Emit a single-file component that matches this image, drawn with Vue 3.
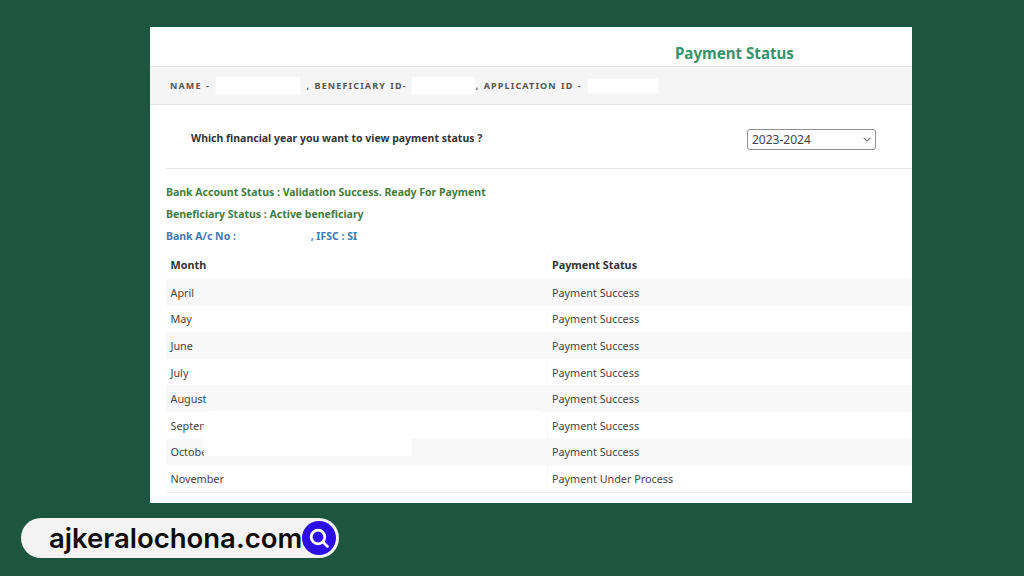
<script setup>
const rows = [
  ['April', 'Payment Success'],
  ['May', 'Payment Success'],
  ['June', 'Payment Success'],
  ['July', 'Payment Success'],
  ['August', 'Payment Success'],
  ['September', 'Payment Success'],
  ['October', 'Payment Success'],
  ['November', 'Payment Under Process'],
]
</script>

<template>
  <div class="page">
    <main class="card">
      <h1 class="title">Payment Status</h1>
      <div class="idbar">
        <span>NAME -</span><span class="hide w-name"></span>
        <span>, BENEFICIARY ID-</span><span class="hide w-id"></span>
        <span>, APPLICATION ID -</span><span class="hide w-app"></span>
      </div>
      <div class="year">
        <span class="question">Which financial year you want to view payment status ?</span>
        <div class="select">
          <span>2023-2024</span>
          <svg width="8" height="5" viewBox="0 0 8 5"><path d="M.7.8L4 4 7.3.8" fill="none" stroke="#777" stroke-width="1.1"/></svg>
        </div>
      </div>
      <div class="info">
        <p class="ok">Bank Account Status : Validation Success. Ready For Payment</p>
        <p class="ok">Beneficiary Status : Active beneficiary</p>
        <p class="bank">Bank A/c No : <span class="hide w-acc"></span>, IFSC : SI</p>
      </div>
      <div class="table">
        <div class="row head">
          <div class="cell">Month</div>
          <div class="cell">Payment Status</div>
        </div>
        <div v-for="r in rows" :key="r[0]" class="row">
          <div class="cell">{{ r[0] }}</div>
          <div class="cell">{{ r[1] }}</div>
        </div>
        <div class="mask mask-a"></div>
        <div class="mask mask-b"></div>
      </div>
    </main>
    <div class="pill">
      <span class="site">ajkeralochona.com</span>
      <span class="badge">
        <svg width="24" height="24" viewBox="0 0 24 24"><circle cx="11" cy="11" r="6.8" fill="none" stroke="#fff" stroke-width="2.8"/><path d="M16 16l4.5 4.5" stroke="#fff" stroke-width="2.6" stroke-linecap="round"/></svg>
      </span>
    </div>
  </div>
</template>

<style scoped>
.page {
  width: 1024px;
  height: 576px;
  box-sizing: border-box;
  padding-top: 27px;
  background: #1e5541;
  overflow: hidden;
  font-family: "Noto Sans", sans-serif;
}
.card {
  width: 762px;
  height: 476px;
  margin-left: 150px;
  background: #fff;
  overflow: hidden;
}
.title {
  margin: 0;
  height: 39px;
  padding: 16px 0 0 525px;
  box-sizing: border-box;
  font-size: 15.1px;
  line-height: 21px;
  font-weight: 700;
  color: #36926a;
}
.idbar {
  height: 39px;
  box-sizing: border-box;
  padding-left: 20px;
  display: flex;
  align-items: center;
  background: #f5f5f5;
  border-top: 1px solid #e6e6e6;
  border-bottom: 1px solid #e4e4e4;
  font-size: 9px;
  font-weight: 700;
  letter-spacing: 1.15px;
  word-spacing: 0.8px;
  color: #555;
  white-space: pre;
}
.hide {
  display: inline-block;
  background: #fff;
  vertical-align: middle;
  box-shadow: 0 0 2px #fff;
}
.w-name { width: 84px; height: 17px; margin: 0 6.5px 0 6px; }
.w-id { width: 63px; height: 17px; margin: 0 1px 0 5px; }
.w-app { width: 70px; height: 14px; margin-left: 6px; }
.year {
  height: 63px;
  margin-left: 16px;
  padding: 0 36px 0 25px;
  display: flex;
  justify-content: space-between;
  align-items: center;
  border-bottom: 1px solid #e8e8e8;
}
.question {
  margin-top: 2px;
  font-size: 10.5px;
  font-weight: 700;
  color: #333;
}
.select {
  width: 129px;
  height: 21px;
  margin-top: 6px;
  box-sizing: border-box;
  padding: 0 4px;
  display: flex;
  justify-content: space-between;
  align-items: center;
  border: 1px solid #8f8f8f;
  border-radius: 3px;
  font-size: 12px;
  color: #444;
}
.info {
  margin: 12px 0 0 16px;
  font-size: 10.5px;
  font-weight: 700;
  line-height: 22px;
}
.info p { margin: 0; white-space: nowrap; }
.ok { color: #437c3d; }
.bank { color: #4179b4; }
.w-acc { width: 72px; height: 12px; }
.table {
  position: relative;
  margin: 4px 0 0 15.5px;
  border-bottom: 1px solid #f0f0f0;
  font-size: 10.8px;
  color: #444;
}
.row {
  display: grid;
  grid-template-columns: 381.5px 1fr;
  height: 26.6px;
  align-items: center;
}
.row.head {
  height: 28px;
  padding-bottom: 2px;
  box-sizing: border-box;
  font-weight: 700;
  color: #333;
}
.row:nth-child(even) { background: #f8f8f8; }
.cell { padding-left: 5px; }
.cell + .cell { padding-left: 4px; border-left: 1px solid #f8f8f8; align-self: stretch; display: flex; align-items: center; }
.mask {
  position: absolute;
  background: #fff;
  box-shadow: 0 0 2px #fff;
}
.mask-a { left: 38px; top: 163px; width: 207px; height: 42px; }
.mask-b { left: 43px; top: 160px; width: 332px; height: 25px; }
.pill {
  width: 318px;
  height: 40px;
  margin: 15px 0 0 21px;
  box-sizing: border-box;
  padding: 0 3px 0 28px;
  display: flex;
  align-items: center;
  justify-content: space-between;
  background: #f3f3f3;
  border-radius: 20px;
}
.site {
  font-family: Inter, sans-serif;
  font-size: 27.5px;
  font-weight: 600;
  color: #0d0d0d;
}
.badge {
  width: 34px;
  height: 34px;
  display: flex;
  align-items: center;
  justify-content: center;
  border-radius: 50%;
  background: #2b0fe6;
}
</style>
